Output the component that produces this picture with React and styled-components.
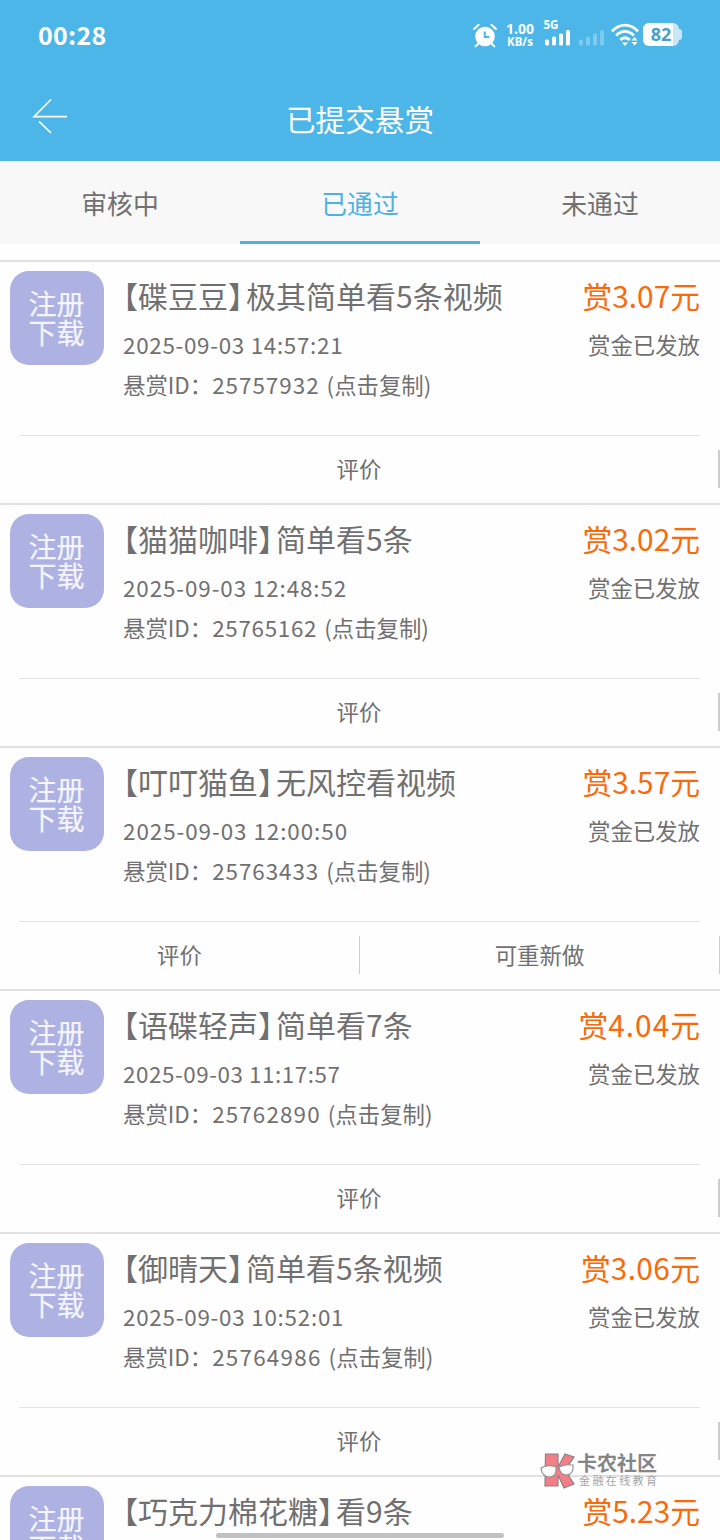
import React from "react";
import styled, { createGlobalStyle } from "styled-components";

const GlobalStyle = createGlobalStyle`
  * {
    box-sizing: border-box;
  }

  body {
    margin: 0;
    background: #fefefe;
    font-family: "Noto Sans CJK SC", sans-serif;
    color: #707070;
  }
`;

const Screen = styled.div`
  position: relative;
  width: 720px;
  height: 1540px;
  overflow: hidden;
`;

const Top = styled.header`
  height: 161px;
  background: #4db6e9;
  color: #fff;
`;

const StatusBar = styled.div`
  display: flex;
  align-items: center;
  justify-content: space-between;
  height: 70px;
  padding: 0 41px 0 38px;
`;

const Clock = styled.span`
  margin-top: -3px;
  font-size: 25px;
  font-weight: 700;
  letter-spacing: 0.3px;
`;

const StatusIcons = styled.div`
  display: flex;
  align-items: center;
`;

const Speed = styled.div`
  width: 30px;
  margin: 0 8px 0 8px;
  font-family: "Noto Sans", sans-serif;
  font-size: 14px;
  line-height: 13px;
  font-weight: 700;
  text-align: center;

  small {
    display: block;
    font-size: 11.5px;
  }
`;

const Battery = styled.div`
  position: relative;
  width: 36px;
  height: 23px;
  margin: 0 0 1px 4px;
  border-radius: 6px;
  background: linear-gradient(to right, #fff 30px, #c7e7f8 30px);
  color: #4a9fc8;
  font-family: "Noto Sans", sans-serif;
  font-size: 18px;
  line-height: 23px;
  font-weight: 700;
  text-align: center;

  &::after {
    content: "";
    position: absolute;
    top: 6px;
    right: -3px;
    width: 3px;
    height: 11px;
    border-radius: 0 3px 3px 0;
    background: #c7e7f8;
  }
`;

const NavBar = styled.div`
  display: grid;
  grid-template-columns: 100px 1fr 100px;
  align-items: center;
  height: 91px;
`;

const BackButton = styled.button`
  display: flex;
  height: 91px;
  padding: 28px 0 0 32px;
  border: none;
  background: none;
  color: inherit;
`;

const NavTitle = styled.h1`
  margin: 7px 0 0;
  font-size: 29.6px;
  line-height: 44px;
  font-weight: 400;
  text-align: center;
`;

const Tabs = styled.nav`
  display: flex;
  height: 83px;
  background: #f8f8f8;
`;

const Tab = styled.button`
  flex: 1;
  padding: 3px 0 0;
  border: none;
  border-bottom: 3px solid ${(props) => (props.$active ? "#4db2e2" : "#f8f8f8")};
  background: none;
  color: ${(props) => (props.$active ? "#4db2e2" : "#707070")};
  font-family: inherit;
  font-size: 25.8px;
`;

const List = styled.main`
  padding-top: 16px;
`;

const Item = styled.article`
  height: 243px;
  border-top: 2px solid #e1e1e1;
`;

const Summary = styled.div`
  display: flex;
  height: 173px;
  padding: 9px 20px 0 9.5px;
`;

const Badge = styled.div`
  width: 94px;
  height: 94px;
  padding: 18px 18px 0 19px;
  border-radius: 19px;
  background: #adb2e2;
  color: #f4f5ff;
  font-size: 28px;
  line-height: 29px;
  -webkit-text-stroke: 0.2px #f4f5ff;
`;

const Details = styled.div`
  flex: 1;
  padding-left: 19.5px;
  white-space: nowrap;
`;

const Title = styled.h2`
  margin: 2px 0 0;
  font-size: 30px;
  line-height: 44px;
  font-weight: 400;
`;

const Bracket = styled.span`
  font-feature-settings: "halt";
  margin-right: ${(props) => (props.$close ? "3px" : "0")};
`;

const Line = styled.p`
  margin: 0;
  font-size: 22.4px;
  line-height: 40px;
  letter-spacing: ${(props) => props.$tracking || 0}px;
  word-spacing: ${(props) => props.$gap || 0}px;
`;

const DateLine = styled(Line)`
  margin-top: 7px;
`;

const Reward = styled.div`
  text-align: right;
  white-space: nowrap;
`;

const Amount = styled.div`
  margin-top: 2px;
  color: #f96a0a;
  font-size: 29.8px;
  line-height: 44px;
`;

const Digits = styled.span`
  letter-spacing: ${(props) => props.$tracking || 0}px;
`;

const Actions = styled.div`
  display: flex;
  align-items: center;
  height: 68px;

  &::before {
    content: "";
    align-self: flex-start;
    width: 681px;
    height: 1px;
    margin: 0 -700px 0 19px;
    background: #e4e4e4;
  }
`;

const Action = styled.button`
  flex: 1;
  height: 38px;
  padding: 0 0 2px;
  border: none;
  border-right: ${(props) => props.$edge || 1}px solid #cdcdcd;
  background: none;
  color: inherit;
  font-family: inherit;
  font-size: 22.4px;
  line-height: 36px;
`;

const Watermark = styled.div`
  position: absolute;
  left: 539px;
  top: 1450px;
  display: flex;
`;

const WatermarkText = styled.div`
  padding-left: 1px;
  color: #858585;
  font-size: 20px;
  line-height: 26px;
  font-weight: 700;
  white-space: nowrap;

  small {
    display: block;
    padding-left: 2px;
    color: #a5a5a5;
    font-size: 11px;
    line-height: 9px;
    font-weight: 400;
    letter-spacing: 2.4px;
  }
`;

const HomeBar = styled.div`
  position: absolute;
  left: 216px;
  bottom: 2px;
  width: 288px;
  height: 5px;
  border-radius: 3px;
  background: #c1c1c1;
`;

const AlarmIcon = () => (
  <svg width="24" height="25" viewBox="0 0 24 25" fill="none">
    <circle cx="12" cy="13.5" r="9.8" fill="#fff" />
    <path
      d="M1 6 5.6 1.8M23 6l-4.6-4.2M5 21l-2.4 2.4M19 21l2.4 2.4"
      stroke="#fff"
      strokeWidth="2"
      strokeLinecap="round"
    />
    <path d="M11.8 8.5v5.6h4.6" stroke="#4db6e9" strokeWidth="2" />
  </svg>
);

const Signal = ({ network }) => (
  <svg width="34" height="32" viewBox="-1 -4 34 32">
    {network && (
      <text
        x="-0.5"
        y="6"
        fill="#fff"
        fontFamily="Noto Sans"
        fontSize="11.5"
        fontWeight="700"
      >
        {network}
      </text>
    )}
    <g fill="#fff" opacity={network ? 1 : 0.28}>
      <rect x="1" y="16.5" width="4" height="6" rx="1.5" />
      <rect x="8" y="13.5" width="4" height="9" rx="1.5" />
      <rect x="15" y="10.5" width="4" height="12" rx="1.5" />
      <rect x="22" y="7" width="4" height="15.5" rx="1.5" />
    </g>
  </svg>
);

const WifiIcon = () => (
  <svg width="28" height="24" viewBox="0 0 28 24" fill="none">
    <g stroke="#fff" strokeWidth="2.8">
      <path d="M1 8.2C8.5 0 19.5 0 27 8.2" />
      <path d="M5.2 12.6C10.4 7 17.6 7 22.8 12.6" />
      <path d="M9.3 17C12 14 16 14 18.7 17" />
    </g>
    <path
      d="M11 19.5h6l-3 3.5zM20.5 17.500h6l-3-3.500zM20.5 19h6l-3 3.500z"
      fill="#fff"
    />
  </svg>
);

const BackIcon = () => (
  <svg width="37" height="36" viewBox="0 0 37 36" fill="none">
    <path
      d="M19 1.5 2 18.6H35M7 23.3 19 35"
      stroke="#fff"
      strokeWidth="1.7"
    />
  </svg>
);

const WatermarkLogo = () => (
  <svg width="37" height="40" viewBox="0 0 37 40">
    <g fill="#f27f88" stroke="#8d8084" strokeWidth="1.2">
      <path d="M6.5 4H19v13l7-13 9 3-9 13 9 14-10 4-6-13v11H6z" />
    </g>
    <g fill="#fff" stroke="#929292" strokeWidth="1.2">
      <path d="M2 18q7-4 15-1 1 9-6 10-8 0-9-9z" />
      <path d="M20 17q6-3 14-2 1 9-6 10-7 0-8-8z" />
    </g>
  </svg>
);

const rewards = [
  {
    name: "碟豆豆",
    text: "极其简单看5条视频",
    date: "2025-09-03 14:57:21",
    id: "25757932",
    amount: "3.07",
    dateTracking: 0.7,
    idTracking: 1,
  },
  {
    name: "猫猫咖啡",
    text: "简单看5条",
    date: "2025-09-03 12:48:52",
    id: "25765162",
    amount: "3.02",
    dateTracking: 0.9,
    idTracking: 0.7,
  },
  {
    name: "叮叮猫鱼",
    text: "无风控看视频",
    date: "2025-09-03 12:00:50",
    id: "25763433",
    amount: "3.57",
    dateTracking: 0.95,
    idTracking: 0.95,
    redo: true,
  },
  {
    name: "语碟轻声",
    text: "简单看7条",
    date: "2025-09-03 11:17:57",
    id: "25762890",
    amount: "4.04",
    dateTracking: 0.55,
    idTracking: 1.15,
    amountTracking: 1,
  },
  {
    name: "御晴天",
    text: "简单看5条视频",
    date: "2025-09-03 10:52:01",
    id: "25764986",
    amount: "3.06",
    dateTracking: 0.75,
    idTracking: 1.25,
    amountTracking: 0.4,
  },
  {
    name: "巧克力棉花糖",
    text: "看9条",
    amount: "5.23",
  },
];

const RewardItem = ({ reward }) => (
  <Item>
    <Summary>
      <Badge>注册下载</Badge>
      <Details>
        <Title>
          <Bracket>【</Bracket>
          {reward.name}
          <Bracket $close>】</Bracket>
          {reward.text}
        </Title>
        {reward.id && (
          <>
            <DateLine $tracking={reward.dateTracking}>{reward.date}</DateLine>
            <Line $gap={2}>
              悬赏ID：
              <Digits $tracking={reward.idTracking}>{reward.id}</Digits>{" "}
              (点击复制)
            </Line>
          </>
        )}
      </Details>
      <Reward>
        <Amount>
          赏<Digits $tracking={reward.amountTracking}>{reward.amount}</Digits>元
        </Amount>
        {reward.id && <DateLine>赏金已发放</DateLine>}
      </Reward>
    </Summary>
    {reward.id && (
      <Actions>
        <Action $edge={reward.redo ? 1 : 2}>评价</Action>
        {reward.redo && <Action>可重新做</Action>}
      </Actions>
    )}
  </Item>
);

const App = () => (
  <Screen>
    <GlobalStyle />
    <Top>
      <StatusBar>
        <Clock>00:28</Clock>
        <StatusIcons>
          <AlarmIcon />
          <Speed>
            1.00
            <small>KB/s</small>
          </Speed>
          <Signal network="5G" />
          <Signal />
          <WifiIcon />
          <Battery>82</Battery>
        </StatusIcons>
      </StatusBar>
      <NavBar>
        <BackButton aria-label="返回">
          <BackIcon />
        </BackButton>
        <NavTitle>已提交悬赏</NavTitle>
      </NavBar>
    </Top>
    <Tabs>
      <Tab>审核中</Tab>
      <Tab $active>已通过</Tab>
      <Tab>未通过</Tab>
    </Tabs>
    <List>
      {rewards.map((reward) => (
        <RewardItem key={reward.name} reward={reward} />
      ))}
    </List>
    <Watermark>
      <WatermarkLogo />
      <WatermarkText>
        卡农社区
        <small>金融在线教育</small>
      </WatermarkText>
    </Watermark>
    <HomeBar />
  </Screen>
);

export default App;
